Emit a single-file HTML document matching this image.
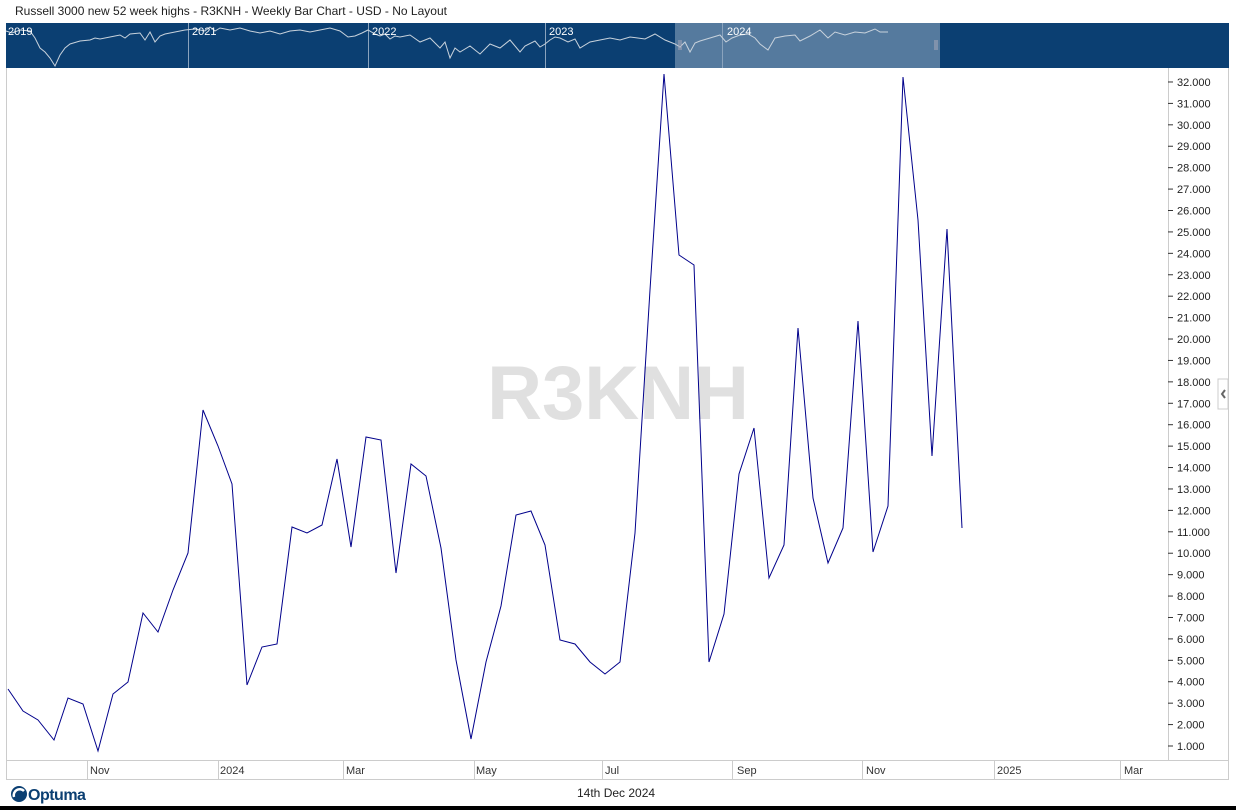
<!DOCTYPE html>
<html><head><meta charset="utf-8"><style>
body{margin:0;width:1236px;height:810px;background:#fff;position:relative;overflow:hidden;font-family:"Liberation Sans",sans-serif}
.t{position:absolute;left:15px;top:4px;font-size:12px;color:#222}
</style></head><body>
<div class="t">Russell 3000 new 52 week highs - R3KNH - Weekly Bar Chart - USD - No Layout</div>
<svg width="1236" height="810" style="position:absolute;left:0;top:0">
<rect x="6" y="23" width="1223" height="45" fill="#0b3f72"/>
<rect x="675" y="23" width="265" height="45" fill="#557a9e"/>
<g stroke="#8aa3bd" stroke-width="1"><line x1="188.5" y1="23" x2="188.5" y2="68"/><line x1="368.5" y1="23" x2="368.5" y2="68"/><line x1="545.5" y1="23" x2="545.5" y2="68"/><line x1="722.5" y1="23" x2="722.5" y2="68"/></g>
<polyline fill="none" stroke="#c8d2dc" stroke-width="1" points="6,31 12,33 20,30 30,31 35,38 40,48 45,52 50,58 55,66 60,55 65,48 70,44 80,41 90,40 95,38 100,39 110,37 120,35 125,38 130,34 140,33 145,40 150,32 155,42 160,36 165,34 175,32 185,30 195,29 205,31 210,27 215,31 220,28 230,30 240,28 250,31 260,33 270,31 280,34 290,31 300,30 310,32 320,30 330,28 340,31 348,37 355,36 362,33 368,30 375,34 380,36 385,34 390,39 395,36 400,37 410,35 420,42 430,38 440,48 445,42 450,58 455,48 460,52 470,46 480,54 490,44 500,48 510,40 520,52 525,46 535,41 540,47 545,44 550,40 555,37 560,38 568,42 575,39 580,48 590,42 600,40 610,38 620,40 630,37 645,39 655,34 665,40 675,44 680,47 685,42 690,52 695,43 700,41 710,38 720,35 726,42 732,38 740,35 748,34 755,38 760,44 768,50 775,38 785,36 795,35 800,41 810,36 820,30 828,38 835,32 845,35 855,32 865,33 875,29 880,32 888,32"/>
<g fill="#fff" font-size="11"><text x="8" y="35">2019</text><text x="192" y="35">2021</text><text x="372" y="35">2022</text><text x="549" y="35">2023</text><text x="727" y="35">2024</text></g>
<g stroke="#aab" ><line x1="679" y1="40" x2="679" y2="50"/><line x1="681" y1="40" x2="681" y2="50"/><line x1="935" y1="40" x2="935" y2="50"/><line x1="937" y1="40" x2="937" y2="50"/></g>
<line x1="6.5" y1="68" x2="6.5" y2="779" stroke="#ccc"/>
<line x1="1228.5" y1="68" x2="1228.5" y2="779" stroke="#ccc"/>
<line x1="1168.5" y1="68" x2="1168.5" y2="760" stroke="#ccc"/>
<rect x="1218" y="379" width="10" height="30" fill="#fff" stroke="#ccc"/>
<path d="M1225,390 l-3,4 l3,4" fill="none" stroke="#666" stroke-width="2"/>
<text x="618" y="419" text-anchor="middle" font-size="76" font-weight="bold" fill="#e0e0e0">R3KNH</text>
<g id="ax" font-size="11" fill="#222"></g>
<rect x="6.5" y="760.5" width="1222" height="19" fill="none" stroke="#ccc"/>
<g stroke="#ccc"><line x1="87.5" y1="760" x2="87.5" y2="779"/><line x1="218.5" y1="760" x2="218.5" y2="779"/><line x1="343.5" y1="760" x2="343.5" y2="779"/><line x1="474.5" y1="760" x2="474.5" y2="779"/><line x1="602.5" y1="760" x2="602.5" y2="779"/><line x1="732.5" y1="760" x2="732.5" y2="779"/><line x1="862.5" y1="760" x2="862.5" y2="779"/><line x1="994.5" y1="760" x2="994.5" y2="779"/><line x1="1120.5" y1="760" x2="1120.5" y2="779"/></g>
<g font-size="11" fill="#333"><text x="90" y="774">Nov</text><text x="220" y="774">2024</text><text x="346" y="774">Mar</text><text x="476" y="774">May</text><text x="605" y="774">Jul</text><text x="737" y="774">Sep</text><text x="866" y="774">Nov</text><text x="997" y="774">2025</text><text x="1124" y="774">Mar</text></g>
<polyline fill="none" stroke="#00008b" stroke-width="1" points="8,689 23,711 38,720 54,740 68,698 83,704 98,751 113,694 128,682 143,613 158,632 173,590 188,553 203,410 218,446 232,484 247,685 262,647 277,644 292,527 307,533 322,525 337,459 351,547 366,437 381,440 396,573 411,464 426,476 441,548 456,660 471,739 486,662 501,606 516,515 531,511 545,545 560,640 575,644 590,662 605,674 620,662 635,533 650,290 664,74 679,255 694,265 709,662 724,614 739,474 754,428 769,578 784,545 798,328 813,498 828,563 843,528 858,321 873,552 888,506 903,77 918,220 932,456 947,229 962,528"/>
<circle cx="19" cy="794" r="8" fill="#0b3f72"/><path d="M14,797 a6,6 0 0 1 10,-6" stroke="#fff" stroke-width="2.5" fill="none"/>
<text x="28" y="800" font-size="16" font-weight="bold" fill="#0b3f72" letter-spacing="-0.5">Optuma</text>
<text x="577" y="797" font-size="12" fill="#222">14th Dec 2024</text>
<rect x="0" y="806" width="1236" height="4" fill="#000"/>
</svg>
<script>
var g=document.getElementById('ax'),s='';
for(var v=1;v<=32;v++){var y=746-(v-1)*21.42;s+='<line x1="1168" x2="1173" y1="'+y+'" y2="'+y+'" stroke="#333"/><text x="1177" y="'+(y+4)+'">'+v+'.000</text>';}
g.innerHTML=s;
</script>
</body></html>
